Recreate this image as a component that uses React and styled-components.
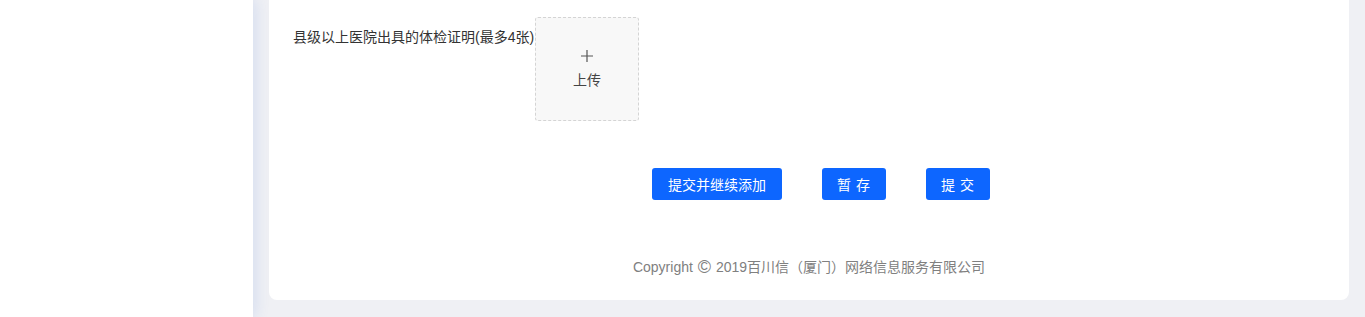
import React from "react";
import styled, { createGlobalStyle } from "styled-components";

const GlobalStyle = createGlobalStyle`
	html, body {
		margin: 0;
		padding: 0;
		height: 317px;
		overflow: hidden;
		font-family: "Liberation Sans", "Noto Sans CJK SC", sans-serif;
	}
`;

const Page = styled.div`
	display: flex;
	height: 317px;
	background: #eff0f4;
`;

const Sidebar = styled.div`
	width: 253px;
	flex-shrink: 0;
	background: #fff;
	box-shadow: 2px 0 14px rgba(40, 100, 220, 0.14);
	position: relative;
	z-index: 1;
`;

const Main = styled.div`
	flex: 1;
	padding: 0 16px 17px 16px;
	display: flex;
`;

const Card = styled.div`
	flex: 1;
	background: #fff;
	border-radius: 0 0 8px 8px;
	padding: 17px 24px 0 24px;
	display: flex;
	flex-direction: column;
`;

const FormRow = styled.div`
	display: flex;
	align-items: flex-start;
`;

const Label = styled.div`
	width: 242px;
	padding-top: 10px;
	font-size: 14px;
	line-height: 20px;
	color: #333;
	white-space: nowrap;
`;

const Upload = styled.div`
	width: 102px;
	height: 102px;
	border: 1px dashed #d4d4d4;
	border-radius: 3px;
	background: #f8f8f8;
	display: flex;
	flex-direction: column;
	align-items: center;
	justify-content: center;
	gap: 7px;
	color: #444;
	font-size: 14px;
	line-height: 20px;
	font-family: "Noto Sans CJK SC", sans-serif;
`;

const Actions = styled.div`
	display: flex;
	gap: 40px;
	margin-top: 47px;
	padding-left: 359px;
`;

const Button = styled.button`
	height: 32px;
	width: ${props => props.width}px;
	border: none;
	border-radius: 3px;
	background: #0d66ff;
	color: #fff;
	font-size: 14px;
	font-family: "Noto Sans CJK SC", sans-serif;
	letter-spacing: ${props => (props.spaced ? "1px" : "0")};
	padding: 0;
	cursor: pointer;
`;

const Footer = styled.div`
	margin-top: 57px;
	text-align: center;
	font-size: 14px;
	line-height: 20px;
	color: #808080;
`;

const Copy = styled.span`
	font-size: 18px;
	margin: 0 1px;
	vertical-align: -1px;
`;

const Plus = () => (
	<svg width="12" height="12" viewBox="0 0 12 12">
		<path d="M6 0V12M0 6H12" stroke="#555" strokeWidth="1.2" />
	</svg>
);

export default function App() {
	return (
		<>
			<GlobalStyle />
			<Page>
				<Sidebar />
				<Main>
					<Card>
						<FormRow>
							<Label>县级以上医院出具的体检证明(最多4张)</Label>
							<Upload>
								<Plus />
								<span>上传</span>
							</Upload>
						</FormRow>
						<Actions>
							<Button width={130}>提交并继续添加</Button>
							<Button width={64} spaced>暂 存</Button>
							<Button width={64} spaced>提 交</Button>
						</Actions>
						<Footer>
							Copyright <Copy>©</Copy> 2019百川信（厦门）网络信息服务有限公司
						</Footer>
					</Card>
				</Main>
			</Page>
		</>
	);
}
